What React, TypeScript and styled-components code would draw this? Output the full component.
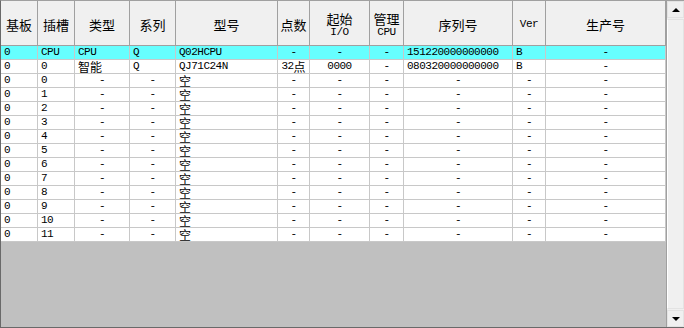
import styled, { createGlobalStyle } from "styled-components";

const GlobalStyle = createGlobalStyle`
  html, body {
    margin: 0;
    padding: 0;
    background: #ffffff;
  }
`;

const COLS = [37, 37, 55, 46, 102, 32, 60, 34, 109, 33, 120];

// columns whose text sits at the left (a lone "-" is always centred)
const LEFT = [true, true, true, true, true, false, false, false, true, true, false];

const Frame = styled.div`
  width: 684px;
  height: 328px;
  box-sizing: border-box;
  display: flex;
  border-left: 1px solid #696969;
  border-top: 1px solid #a0a0a0;
  border-bottom: 1px solid #696969;
  background: #c0c0c0;
  overflow: hidden;
`;

const ListArea = styled.div`
  flex: 1;
  display: flex;
  flex-direction: column;
  background: #c0c0c0;
`;

const Grid = styled.div`
  display: grid;
  grid-template-columns: ${COLS.map((w) => `${w}px`).join(" ")};
`;

const HeaderCell = styled.div`
  height: 45px;
  box-sizing: border-box;
  padding-top: 2px;
  background: #f0f0f0;
  border-right: 1px solid #a0a0a0;
  border-bottom: 1px solid #a0a0a0;
  display: flex;
  flex-direction: column;
  align-items: center;
  justify-content: center;
  font-family: "Noto Sans CJK SC", sans-serif;
  font-size: 13px;
  line-height: 15px;
  color: #000;
`;

const HeaderSub = styled.span`
  font-family: "Liberation Mono", monospace;
  font-size: 11px;
  letter-spacing: -0.5px;
  line-height: 12px;
`;

const Cell = styled.div<{ $left: boolean; $hi: boolean }>`
  height: 14px;
  box-sizing: border-box;
  background: ${(p) => (p.$hi ? "#66ffff" : "#ffffff")};
  border-right: 1px solid #c8c8c8;
  border-bottom: 1px solid #c8c8c8;
  display: flex;
  align-items: center;
  justify-content: ${(p) => (p.$left ? "flex-start" : "center")};
  padding-left: ${(p) => (p.$left ? "3px" : "0")};
  font-family: "Liberation Mono", monospace;
  font-size: 11px;
  letter-spacing: -0.5px;
  line-height: 13px;
  white-space: nowrap;
  color: #000;
`;

const Cjk = styled.span`
  font-family: "Noto Sans CJK SC", sans-serif;
  font-size: 12px;
  letter-spacing: 0;
  line-height: 12px;
`;

const ScrollBar = styled.div`
  width: 18px;
  display: flex;
  flex-direction: column;
  background: #f0f0f0;
  border-left: 1px solid #a0a0a0;
  box-sizing: border-box;
`;

const ArrowButton = styled.div<{ $down?: boolean }>`
  height: 17px;
  box-sizing: border-box;
  display: flex;
  align-items: center;
  justify-content: center;
  background: #f0f0f0;
  border: 1px solid #e3e3e3;
  &::after {
    content: "";
    width: 0;
    height: 0;
    border-left: 4px solid transparent;
    border-right: 4px solid transparent;
    ${(p) =>
      p.$down ? "border-top: 4px solid #000;" : "border-bottom: 4px solid #000;"}
  }
`;

const Thumb = styled.div`
  flex: 1;
  margin: 1px 0;
  background: #f0f0f0;
  border: 1px solid #e3e3e3;
  border-left-color: #ffffff;
`;

const headers: { main: string; sub?: string; mono?: boolean }[] = [
  { main: "基板" },
  { main: "插槽" },
  { main: "类型" },
  { main: "系列" },
  { main: "型号" },
  { main: "点数" },
  { main: "起始", sub: "I/O" },
  { main: "管理", sub: "CPU" },
  { main: "序列号" },
  { main: "Ver", mono: true },
  { main: "生产号" },
];

const rows: string[][] = [
  ["0", "CPU", "CPU", "Q", "Q02HCPU", "-", "-", "-", "151220000000000", "B", "-"],
  ["0", "0", "智能", "Q", "QJ71C24N", "32点", "0000", "-", "080320000000000", "B", "-"],
  ...Array.from({ length: 12 }, (_, i) => [
    "0", String(i), "-", "-", "空", "-", "-", "-", "-", "-", "-",
  ]),
];

// split text into latin / CJK runs so each gets its own font size
const renderText = (text: string) =>
  text.split(/([\u4e00-\u9fff]+)/).filter(Boolean).map((part, i) =>
    /[\u4e00-\u9fff]/.test(part) ? <Cjk key={i}>{part}</Cjk> : <span key={i}>{part}</span>
  );

const App = () => {
  return (
    <>
      <GlobalStyle />
      <Frame>
        <ListArea>
          <Grid>
            {headers.map((h, i) => (
              <HeaderCell key={i}>
                {h.mono ? <HeaderSub>{h.main}</HeaderSub> : <span>{h.main}</span>}
                {h.sub && <HeaderSub>{h.sub}</HeaderSub>}
              </HeaderCell>
            ))}
            {rows.map((row, r) =>
              row.map((text, c) => (
                <Cell key={`${r}-${c}`} $hi={r === 0} $left={LEFT[c] && text !== "-"}>
                  {renderText(text)}
                </Cell>
              ))
            )}
          </Grid>
        </ListArea>
        <ScrollBar>
          <ArrowButton />
          <Thumb />
          <ArrowButton $down />
        </ScrollBar>
      </Frame>
    </>
  );
};

export default App;
